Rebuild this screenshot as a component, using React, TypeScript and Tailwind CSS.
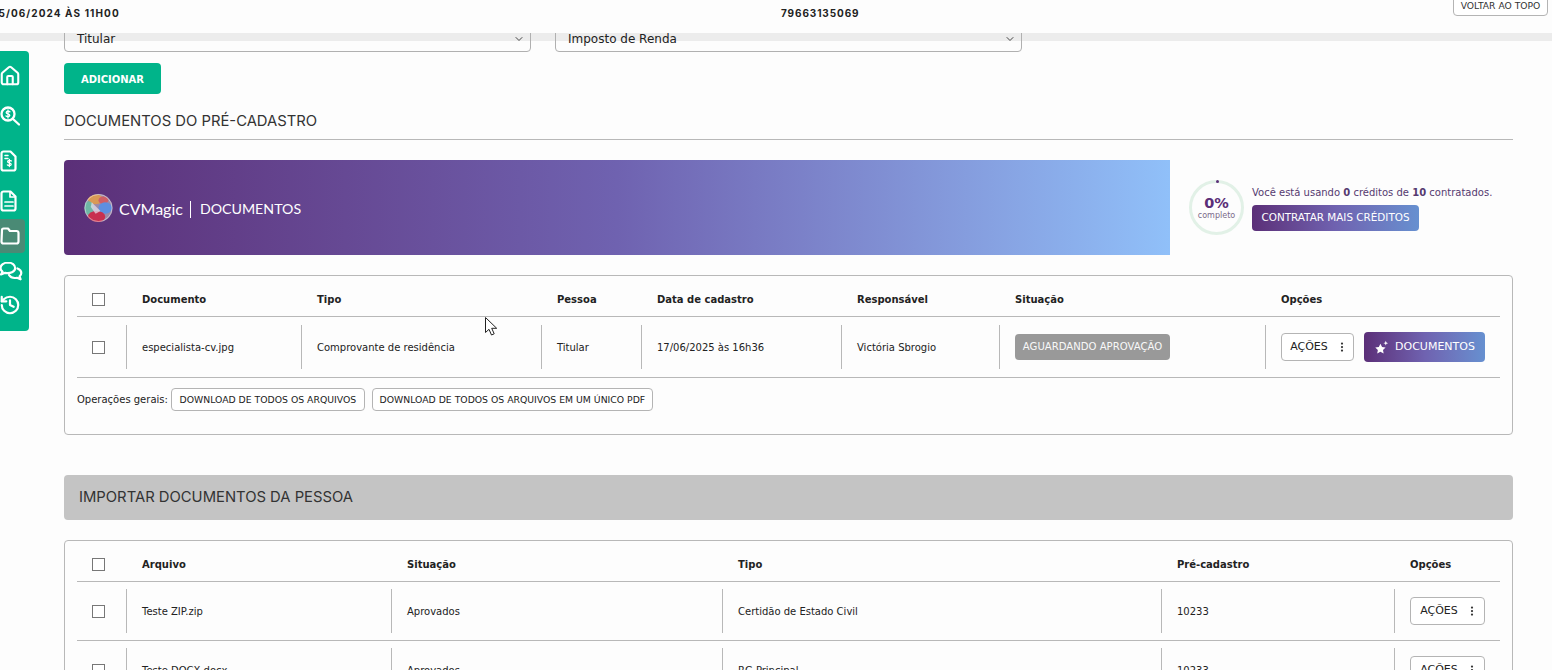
import { ChevronDown, EllipsisVertical, History, House } from "lucide-react";

const verdana = "font-['DejaVu_Sans',sans-serif]";

const SearchDollar = () => (
  <svg width="20" height="20" viewBox="0 0 20 20" fill="none" stroke="currentColor" strokeWidth="2.300" strokeLinecap="round">
    <circle cx="8" cy="8" r="6.500" />
    <path d="M13 13l6 5.500" />
    <path d="M10 5.800c-.5-.7-3.600-1-3.800.7-.2 1.900 3.800 1 3.600 3-.2 1.500-3.200 1.300-3.900.4M8 4v8" strokeWidth="1.300" />
  </svg>
);

const FileDollar = () => (
  <svg width="20" height="22" viewBox="0 0 20 22" fill="none" stroke="currentColor" strokeWidth="2.200" strokeLinejoin="round" strokeLinecap="round">
    <path d="M4.500 1.500h7l5 5v12a2 2 0 0 1-2 2h-10a2 2 0 0 1-2-2v-15a2 2 0 0 1 2-2z" />
    <path d="M6 5.500h3M6 8.500h3" strokeWidth="1.500" />
    <path d="M12.300 11c-.5-.7-3.500-1-3.700.6-.2 1.700 3.800 1 3.600 2.900-.2 1.500-3.200 1.300-3.800.4M10.400 9.500v7" strokeWidth="1.300" />
  </svg>
);

const FileLines = () => (
  <svg width="20" height="22" viewBox="0 0 20 22" fill="none" stroke="currentColor" strokeWidth="2.200" strokeLinejoin="round" strokeLinecap="round">
    <path d="M4.500 1.500h7l5 5v12a2 2 0 0 1-2 2h-10a2 2 0 0 1-2-2v-15a2 2 0 0 1 2-2z" />
    <path d="M11 2v5h5M6 12h8M6 16h8" strokeWidth="1.700" />
  </svg>
);

const FolderOutline = () => (
  <svg width="20" height="18" viewBox="0 0 20 18" fill="none" stroke="currentColor" strokeWidth="2.200" strokeLinejoin="round">
    <path d="M2 3a1.500 1.500 0 0 1 1.500-1.500h4.500l2 2.500h6.500a2 2 0 0 1 2 2v8.500a2 2 0 0 1-2 2h-13a2 2 0 0 1-2-2z" />
  </svg>
);

const Chats = () => (
  <svg width="24" height="20" viewBox="0 0 24 20" fill="none" stroke="currentColor" strokeWidth="2.200" strokeLinejoin="round" strokeLinecap="round">
    <path d="M9 1.500c-4 0-7.500 2.300-7.500 5.500 0 1.500.7 2.700 2 3.700L2 13.500l4.200-1.700c4.800 1 10-1 10-4.800 0-3.200-3.200-5.500-7.200-5.500z" />
    <path d="M18.500 7.500c2.300.8 3.800 2.400 3.800 4.500 0 1.300-.6 2.400-1.700 3.300l1 3-3.700-1.500c-3.300.6-6.500-.5-7.900-2.800" />
  </svg>
);

const Box = ({ children, className = "" }: { children: React.ReactNode; className?: string }) => (
  <span className={`inline-flex items-center justify-center border border-[#b4b4b4] rounded-[4px] bg-white ${className}`}>{children}</span>
);

const Checkbox = () => <span className="block w-[13px] h-[13px] ml-[15px] border border-[#777] bg-white" />;

const Acoes = ({ className = "w-[75px]" }: { className?: string }) => (
  <Box className={`h-[28px] text-[#222] text-[11px] gap-[8px] ${className}`}>
    AÇÕES
    <EllipsisVertical size={12} strokeWidth={2.500} className="-mr-[3px] text-[#333]" />
  </Box>
);

const docCols = "grid grid-cols-[49px_175px_240px_100px_200px_158px_266px_1fr]";
const fileCols = "grid grid-cols-[49px_265px_331px_439px_233px_1fr]";
const headCell = "pl-4 text-[10px] font-bold text-[#222]";
const bodyCell = "flex items-center h-[44px] pl-[15px] border-l border-[#b8b8b8] text-[10px] text-[#222]";

const fileRows = [
  { name: "Teste ZIP.zip", status: "Aprovados", type: "Certidão de Estado Civil", pre: "10233" },
  { name: "Teste DOCX.docx", status: "Aprovados", type: "RG Principal", pre: "10233" },
];

export default function App() {
  return (
    <div className={`relative h-[670px] overflow-hidden bg-[#fdfdfd] ${verdana}`}>
      <div className="absolute left-0 right-0 top-[33px] h-[8px] bg-[#ececec]" />

      {/* Topo fixo */}
      <header className="relative z-10 flex h-[33px] bg-[#fdfdfd]">
        <div className="w-[781px] pt-[6px] -ml-[7px] font-['Inter',sans-serif] text-[10px] font-bold tracking-[1.100px] text-[#222] whitespace-nowrap">
          15/06/2024 ÀS 11H00
        </div>
        <div className="flex-1 pt-[6px] pl-[7px] font-['Inter',sans-serif] text-[10px] font-bold tracking-[0.900px] text-[#222]">
          79663135069
        </div>
        <div className="-mt-[10px] mr-[4px] h-[26px]">
          <Box className="w-[95px] h-[26px] pt-[6px] text-[9.200px] text-[#333]">VOLTAR AO TOPO</Box>
        </div>
      </header>

      {/* Menu lateral */}
      <nav className="absolute z-20 left-0 top-[51px] w-[29px] h-[280px] pt-[7px] bg-[#00b48a] rounded-r-[4px] text-white overflow-hidden">
        <div className="flex items-center h-[36px]"><House size={22} strokeWidth={2.300} className="-ml-px" /></div>
        <div className="flex items-center h-[44px]"><SearchDollar /></div>
        <div className="flex items-center h-[46px] -ml-px"><FileDollar /></div>
        <div className="flex items-center h-[34px] -ml-px"><FileLines /></div>
        <div className="flex items-center h-[34px] w-[25px] mt-px bg-[#4a8a75] rounded-r-[4px]"><FolderOutline /></div>
        <div className="flex items-center h-[36px] -ml-px"><Chats /></div>
        <div className="flex items-center h-[32px]"><History size={22} strokeWidth={2.400} className="-ml-[1px]" /></div>
      </nav>

      <main className="relative -mt-[8px] pl-[64px] pr-[39px]">
        <div className="flex gap-6 text-[12px] text-[#222]">
          <div className="flex items-center justify-between w-[467px] h-[27px] pl-[12px] pr-[5px] border border-[#b0b0b0] rounded-[4px]">
            Titular <ChevronDown size={12} className="text-[#444]" />
          </div>
          <div className="flex items-center justify-between w-[467px] h-[27px] pl-[12px] pr-[5px] border border-[#b0b0b0] rounded-[4px]">
            Imposto de Renda <ChevronDown size={12} className="text-[#444]" />
          </div>
        </div>

        <button className="block mt-[11px] w-[97px] h-[31px] pt-px bg-[#00b48a] rounded-[4px] text-white text-[10px] font-bold">
          ADICIONAR
        </button>

        <h2 className="mt-[18px] pb-[9px] border-b border-[#b8b8b8] font-['Inter',sans-serif] text-[14.800px] leading-[18px] text-[#333]">
          DOCUMENTOS DO PRÉ-CADASTRO
        </h2>

        {/* Banner CVMagic */}
        <section className="flex mt-5 h-[95px]">
          <div className="flex items-center w-[1106px] pl-5 rounded-l-[4px] bg-gradient-to-r from-[#5b2f78] via-[#6f62b0] to-[#90c0f9] text-white font-['Lato',sans-serif]">
            <svg width="29" height="30" viewBox="0 0 30 30" className="shrink-0 mt-px">
              <defs>
                <clipPath id="logo"><circle cx="15" cy="15" r="14.500" /></clipPath>
              </defs>
              <g clipPath="url(#logo)">
                <rect width="30" height="30" fill="#9c8aa8" />
                <ellipse cx="12" cy="6" rx="8" ry="5" fill="#d99a55" />
                <ellipse cx="20" cy="7" rx="5" ry="4" fill="#cf5f66" />
                <ellipse cx="5" cy="15" rx="5" ry="7" fill="#6fb6a5" />
                <ellipse cx="22" cy="15" rx="7" ry="6" fill="#5d8fe0" />
                <ellipse cx="13" cy="24" rx="9" ry="6" fill="#c8304f" />
                <path d="M8 9l9 9-5 3-5-7z" fill="#e8e2ee" opacity=".7" />
              </g>
              <circle cx="15" cy="15" r="14" fill="none" stroke="#ffffff" strokeOpacity=".45" />
            </svg>
            <span className="ml-[6px] mt-[3px] text-[16px] leading-none">CVMagic</span>
            <span className="ml-[7px] mr-[9px] mt-[3px] h-[17px] border-l border-white" />
            <span className="mt-[3px] text-[14.200px] leading-none">DOCUMENTOS</span>
          </div>
          <div className="flex items-center pl-[19px]">
            <div className="relative flex flex-col items-center justify-center w-[55px] h-[55px] rounded-full border-[3px] border-[#e2f1e7] text-[#5b2f78]">
              <span className="absolute -top-[3px] left-[24px] w-[3px] h-[3px] rounded-full bg-[#5b2f78]" />
              <span className="mt-[2px] text-[14.500px] font-bold leading-[15px]">0%</span>
              <span className="text-[8px] leading-[10px] text-[#7a6a8a]">completo</span>
            </div>
            <div className="ml-2 pt-[2px]">
              <p className="text-[10px] leading-[12px] text-[#553a70]">
                Você está usando <b>0</b> créditos de <b>10</b> contratados.
              </p>
              <button className="block mt-[6px] w-[167px] h-[26px] pt-px rounded-[4px] bg-gradient-to-r from-[#5b2f78] via-[#6f62b0] to-[#6690d0] text-white text-[10.400px]">
                CONTRATAR MAIS CRÉDITOS
              </button>
            </div>
          </div>
        </section>

        {/* Documentos do pre-cadastro */}
        <section className="mt-5 h-[160px] px-3 border border-[#b8b8b8] rounded-[4px]">
          <div className={`${docCols} items-center h-[41px] pt-[7px] border-b border-[#b8b8b8]`}>
            <Checkbox />
            <span className={headCell}>Documento</span>
            <span className={headCell}>Tipo</span>
            <span className={headCell}>Pessoa</span>
            <span className={headCell}>Data de cadastro</span>
            <span className={headCell}>Responsável</span>
            <span className={headCell}>Situação</span>
            <span className={headCell}>Opções</span>
          </div>
          <div className={`${docCols} items-center h-[61px] border-b border-[#b8b8b8]`}>
            <Checkbox />
            <span className={bodyCell}>especialista-cv.jpg</span>
            <span className={bodyCell}>Comprovante de residência</span>
            <span className={bodyCell}>Titular</span>
            <span className={bodyCell}>17/06/2025 às 16h36</span>
            <span className={bodyCell}>Victória Sbrogio</span>
            <span className={bodyCell}>
              <span className="flex items-center justify-center w-[155px] h-[26px] rounded-[4px] bg-[#999999] text-[#f8f8f8] text-[10.100px]">
                AGUARDANDO APROVAÇÃO
              </span>
            </span>
            <span className={bodyCell}>
              <Acoes className="w-[73px]" />
              <span className="flex items-center justify-center gap-[6px] ml-[10px] w-[121px] h-[30px] rounded-[4px] bg-gradient-to-r from-[#5b2f78] via-[#6f62b0] to-[#6690d0] text-white text-[11px]">
                <svg width="15" height="15" viewBox="0 0 14 14" fill="currentColor">
                  <path d="M6 3.500l1.500 3 3.300.5-2.400 2.300.6 3.300L6 11l-3 1.600.6-3.300L1.200 7l3.300-.5z" />
                  <path d="M11 .8l.6 1.600 1.600.6-1.600.6-.6 1.600-.6-1.600L8.800 3l1.600-.6z" />
                </svg>
                DOCUMENTOS
              </span>
            </span>
          </div>
          <div className="flex items-center mt-[10px] text-[9.300px] text-[#222]">
            <span className="text-[10px]">Operações gerais:</span>
            <Box className="ml-[3px] w-[194px] h-[23px]">DOWNLOAD DE TODOS OS ARQUIVOS</Box>
            <Box className="ml-[7px] w-[281px] h-[23px]">DOWNLOAD DE TODOS OS ARQUIVOS EM UM ÚNICO PDF</Box>
          </div>
        </section>

        <div className="flex items-center mt-10 h-[45px] pl-[15px] rounded-[4px] bg-[#c4c4c4] font-['Inter',sans-serif] text-[14.800px] text-[#333]">
          IMPORTAR DOCUMENTOS DA PESSOA
        </div>

        {/* Arquivos da pessoa */}
        <section className="mt-5 px-3 border border-[#b8b8b8] rounded-[4px]">
          <div className={`${fileCols} items-center h-[41px] pt-[6px] border-b border-[#b8b8b8]`}>
            <Checkbox />
            <span className={headCell}>Arquivo</span>
            <span className={headCell}>Situação</span>
            <span className={headCell}>Tipo</span>
            <span className={headCell}>Pré-cadastro</span>
            <span className={headCell}>Opções</span>
          </div>
          {fileRows.map((row) => (
            <div key={row.name} className={`${fileCols} items-center h-[59px] border-b border-[#b8b8b8]`}>
              <Checkbox />
              <span className={`${bodyCell} h-[42px]`}>{row.name}</span>
              <span className={`${bodyCell} h-[42px]`}>{row.status}</span>
              <span className={`${bodyCell} h-[42px]`}>{row.type}</span>
              <span className={`${bodyCell} h-[42px]`}>{row.pre}</span>
              <span className={`${bodyCell} h-[42px]`}><Acoes /></span>
            </div>
          ))}
        </section>
      </main>

      {/* Cursor capturado na tela */}
      <svg className="absolute left-[485px] top-[317px]" width="14" height="20" viewBox="0 0 14 20">
        <path d="M.5.500v15l3.500-3.200 2.500 5.700 2.700-1.200-2.500-5.500h5z" fill="#fff" stroke="#222" strokeWidth="1" />
      </svg>
    </div>
  );
}
